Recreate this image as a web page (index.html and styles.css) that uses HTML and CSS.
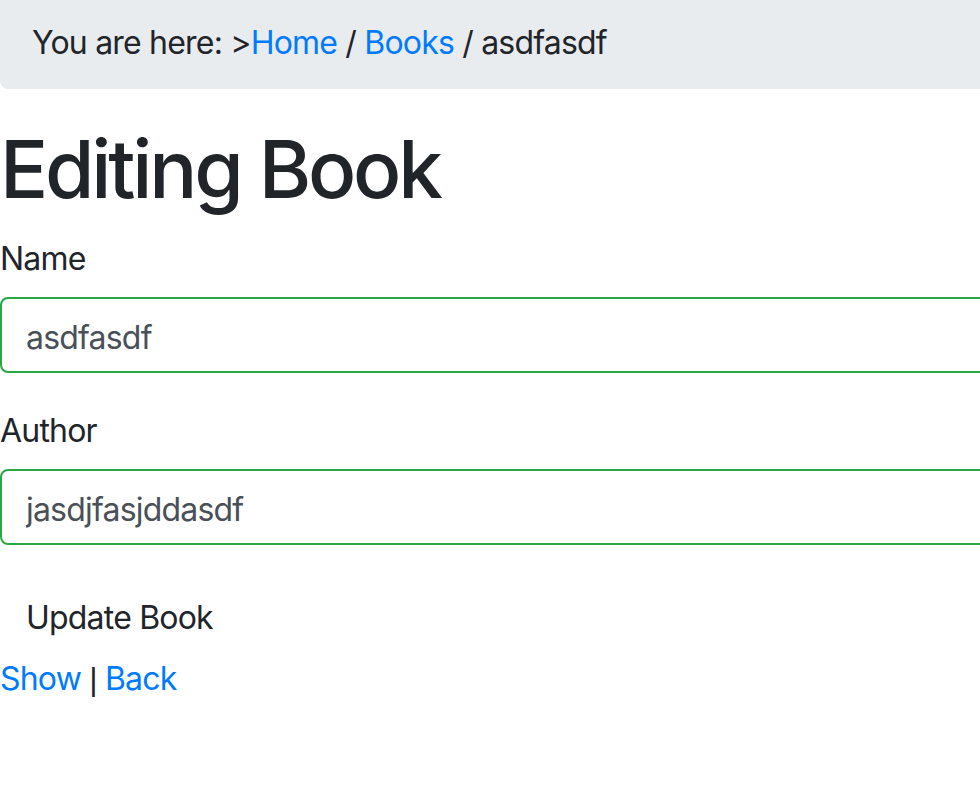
FILE: index.html
```html
<!DOCTYPE html>
<html lang="en">
<head>
<meta charset="utf-8">
<title>Editing Book</title>
<link rel="stylesheet" href="styles.css">
</head>
<body>
<div class="page">
  <nav class="breadcrumb">You are here: &gt;<a href="#">Home</a> / <a href="#">Books</a> / asdfasdf</nav>
  <h1 class="title">Editing Book</h1>
  <form class="form">
    <div class="form-group">
      <label class="label" for="name">Name</label>
      <input class="input" id="name" type="text" value="asdfasdf">
    </div>
    <div class="form-group">
      <label class="label" for="author">Author</label>
      <input class="input" id="author" type="text" value="jasdjfasjddasdf">
    </div>
    <button class="btn" type="button">Update Book</button>
  </form>
  <div class="links"><a href="#">Show</a> <span class="sep">|</span> <a href="#">Back</a></div>
</div>
</body>
</html>
```
FILE: styles.css
```css
html, body {
  margin: 0;
  padding: 0;
  overflow: hidden;
  background: #fff;
}
body {
  font-family: Inter, "Liberation Sans", sans-serif;
  font-size: 32px;
  line-height: 48px;
  letter-spacing: -0.8px;
  color: #212529;
}
a {
  color: #007bff;
  text-decoration: none;
}
.page {
  width: 1200px;
}
.breadcrumb {
  background: #e9ecef;
  padding: 19px 32px 22px;
  border-radius: 0 0 8px 8px;
  margin-bottom: 32px;
}
.title {
  font-size: 80px;
  line-height: 96px;
  font-weight: 500;
  margin: 0 0 16px;
  letter-spacing: -3.2px;
}
.form {
  margin: 0;
}
.form-group {
  margin-bottom: 32px;
}
.label {
  display: block;
  padding-top: 2px;
  margin-bottom: 14px;
}
.input {
  display: block;
  box-sizing: border-box;
  width: 100%;
  height: 76px;
  padding: 14px 24px 10px;
  font-family: inherit;
  font-size: 32px;
  line-height: 48px;
  letter-spacing: -0.8px;
  color: #495057;
  border: 2px solid #28a745;
  border-radius: 8px;
  background: #fff;
  margin: 0;
}
.btn {
  display: block;
  font-family: inherit;
  font-size: 32px;
  line-height: 48px;
  letter-spacing: -0.8px;
  color: #212529;
  background: transparent;
  border: 2px solid transparent;
  padding: 15px 24px 9px;
  margin: 0;
  border-radius: 8px;
}
.links {
  padding-top: 2px;
}
.sep {
  font-family: "Liberation Sans", sans-serif;
}
```
